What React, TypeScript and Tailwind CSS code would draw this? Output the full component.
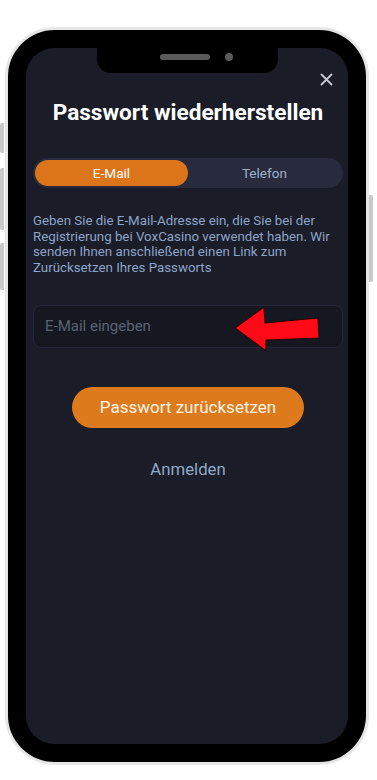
import React from "react";

export default function App() {
  return (
    <div
      className="w-[377px] h-[780px] bg-white flex flex-row items-start pt-[27px] overflow-hidden"
      style={{ fontFamily: "Roboto, 'Liberation Sans', sans-serif" }}
    >
      {/* left side buttons */}
      <div className="w-[5px] flex flex-col items-start">
        <div className="mt-[96px] w-[4px] h-[30px] bg-[#c9c9c9] rounded-l-[2px]" />
        <div className="mt-[15px] w-[4px] h-[62px] bg-[#c9c9c9] rounded-l-[2px]" />
        <div className="mt-[13px] w-[4px] h-[47px] bg-[#c9c9c9] rounded-l-[2px]" />
      </div>

      {/* phone body */}
      <div className="w-[364px] h-[738px] bg-black border-[3px] border-[#e6e6e6] rounded-[50px] p-[18px]">
        <div className="relative w-[322px] h-[696px] bg-[#1a1c27] rounded-[28px] overflow-hidden flex flex-col pl-[7px] pr-[5px]">
          {/* notch */}
          <div className="flex justify-center -ml-[7px] -mr-[5px]">
            <div className="w-[181px] h-[25px] bg-black rounded-b-[14px] flex flex-row items-center pl-[63px] pb-[7px] gap-[15px]">
              <div className="w-[50px] h-[6px] rounded-full bg-[#5a5a5a]" />
              <div className="w-[8px] h-[8px] rounded-full bg-[#5a5a5a]" />
            </div>
          </div>

          {/* close */}
          <div className="flex justify-end pr-[10px]">
            <svg width="13" height="13" viewBox="0 0 13 13" className="block">
              <path d="M1.5 1.5 L11.5 11.5 M11.5 1.5 L1.5 11.5" stroke="#c3c8d6" strokeWidth="1.8" strokeLinecap="round" />
            </svg>
          </div>

          {/* title */}
          <div className="mt-[14px] text-center text-white font-bold text-[22.6px] leading-[26px] whitespace-nowrap">
            Passwort wiederherstellen
          </div>

          {/* tabs */}
          <div className="mt-[32px] h-[30px] rounded-full bg-[#272b3d] p-[2px] grid grid-cols-2">
            <div className="rounded-full bg-[#dc7519] flex items-center justify-center text-white text-[13.6px]">
              E-Mail
            </div>
            <div className="flex items-center justify-center text-[#9fb0cc] text-[13.6px]">
              Telefon
            </div>
          </div>

          {/* description */}
          <p className="mt-[25px] text-[13.3px] leading-[15.7px] text-[#8ea4c9] pr-[2px]">
            Geben Sie die E-Mail-Adresse ein, die Sie bei der Registrierung bei VoxCasino verwendet haben. Wir senden Ihnen anschließend einen Link zum Zurücksetzen Ihres Passworts
          </p>

          {/* input */}
          <div className="relative mt-[29px]">
            <div className="h-[43px] rounded-[8px] bg-[#151820] border border-[#22263a] flex items-center pl-[11px] text-[15px] text-[#5b6272]">
              E-Mail eingeben
            </div>
            <svg
              className="absolute left-[197px] -top-[2px]"
              width="92"
              height="52"
              viewBox="0 0 92 52"
            >
              <polygon
                points="5,25 34,4 35,20 88,15 89,35 36,37 36,48"
                fill="#ff0a16"
                stroke="#2a0508"
                strokeWidth="1.2"
                strokeLinejoin="round"
              />
            </svg>
          </div>

          {/* button */}
          <div className="mt-[39px] flex justify-center">
            <div className="w-[232px] h-[41px] rounded-full bg-[#dd7a1b] flex items-center justify-center text-[17px] text-[#fff4e6]">
              Passwort zurücksetzen
            </div>
          </div>

          {/* login */}
          <div className="mt-[31px] text-center text-[16.8px] leading-[20px] text-[#8fa9c9]">
            Anmelden
          </div>
        </div>
      </div>

      {/* right side button */}
      <div className="w-[5px] flex flex-col items-start">
        <div className="mt-[168px] w-[4px] h-[87px] bg-[#c9c9c9] rounded-r-[2px]" />
      </div>
    </div>
  );
}
